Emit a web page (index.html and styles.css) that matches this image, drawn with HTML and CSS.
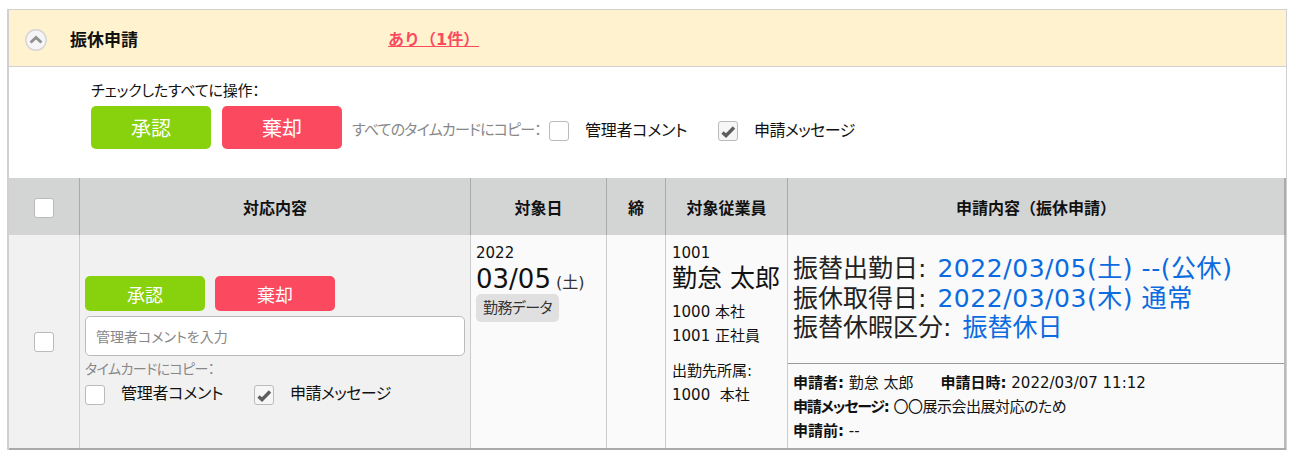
FILE: index.html
```html
<!DOCTYPE html>
<html lang="ja">
<head>
<meta charset="utf-8">
<title>振休申請</title>
<link rel="stylesheet" href="styles.css">
</head>
<body>
<section class="panel">
  <header class="band">
    <span class="toggle"><svg width="22" height="22" viewBox="0 0 22 22"><circle cx="11" cy="11" r="10.2" fill="#f5f5f5" stroke="#d4d4d4" stroke-width="1.4"/><path d="M5.6 13.6 11 8.4l5.4 5.2" fill="none" stroke="#909090" stroke-width="2.8"/></svg></span>
    <h2 class="band-title">振休申請</h2>
    <a class="band-link" href="#">あり（1件）</a>
  </header>
  <div class="bulk">
    <p class="bulk-label narrow">チェックしたすべてに操作：</p>
    <div class="bulk-row">
      <button class="btn btn-ok btn-lg">承認</button>
      <button class="btn btn-ng btn-lg">棄却</button>
      <span class="copy-label narrow">すべてのタイムカードにコピー：</span>
      <span class="box"></span><span class="opt narrow">管理者コメント</span>
      <span class="box box-on"><svg width="18" height="18" viewBox="0 0 18 18"><path d="M3.5 10.5 7 13.6 15 5.5" fill="none" stroke="#5e5e5e" stroke-width="3.4"/></svg></span><span class="opt narrow opt-last">申請メッセージ</span>
    </div>
  </div>
  <div class="grid">
    <div class="th"><span class="box box-head"></span></div>
    <div class="th">対応内容</div>
    <div class="th">対象日</div>
    <div class="th">締</div>
    <div class="th">対象従業員</div>
    <div class="th th-last">申請内容（振休申請）</div>

    <div class="td td-grey td-check"><span class="box"></span></div>
    <div class="td td-grey td-action">
      <div class="row-btns">
        <button class="btn btn-ok btn-sm">承認</button>
        <button class="btn btn-ng btn-sm">棄却</button>
      </div>
      <input class="comment narrow" type="text" placeholder="管理者コメントを入力">
      <div class="copy-small narrow">タイムカードにコピー：</div>
      <div class="row-opts">
        <span class="box"></span><span class="opt narrow">管理者コメント</span>
        <span class="box box-on"><svg width="18" height="18" viewBox="0 0 18 18"><path d="M3.5 10.5 7 13.6 15 5.5" fill="none" stroke="#5e5e5e" stroke-width="3.4"/></svg></span><span class="opt narrow opt-last">申請メッセージ</span>
      </div>
    </div>
    <div class="td td-date">
      <div class="year">2022</div>
      <div class="date">03/05<span class="dow">(土)</span></div>
      <span class="tag narrow">勤務データ</span>
    </div>
    <div class="td"></div>
    <div class="td td-emp">
      <div class="emp-id">1001</div>
      <div class="emp-name">勤怠 太郎</div>
      <div class="emp-line emp-gap">1000 本社</div>
      <div class="emp-line">1001 正社員</div>
      <div class="emp-line emp-gap2">出勤先所属:</div>
      <div class="emp-line">1000&nbsp; 本社</div>
    </div>
    <div class="td td-req">
      <div class="req-main">
        <div>振替出勤日: <span class="blue wide">2022/03/05(土) --(公休)</span></div>
        <div>振休取得日: <span class="blue wide">2022/03/03(木) 通常</span></div>
        <div>振替休暇区分: <span class="blue">振替休日</span></div>
      </div>
      <div class="req-meta">
        <div><b>申請者:</b> 勤怠 太郎<b class="meta-gap">申請日時:</b> 2022/03/07 11:12</div>
        <div><b class="narrow tight">申請メッセージ:</b> <span class="narrow msg">〇〇展示会出展対応のため</span></div>
        <div><b>申請前:</b> --</div>
      </div>
    </div>
  </div>
</section>
</body>
</html>
```
FILE: styles.css
```css
* { box-sizing: border-box; }
body {
  margin: 9px 9px 0 7px;
  background: #fff;
  color: #111;
  font-family: "DejaVu Sans", "Noto Sans CJK JP", sans-serif;
  font-size: 13px;
}
.panel {
  border: 1px solid #cfcfcf;
  border-width: 1px 1px 0 2px;
  border-color: #d0d0d0;
  background: #fff;
}
.narrow { font-feature-settings: "palt"; }
.band {
  display: flex;
  align-items: center;
  height: 57px;
  padding: 4px 0 0 16px;
  background: #fff3cf;
  border-bottom: 1px solid #d0d0d0;
}
.toggle { display: flex; width: 22px; height: 22px; }
.band-title {
  margin: 0 0 0 23px;
  width: 318px;
  font-size: 17px;
  font-weight: 700;
  line-height: 24px;
}
.band-link {
  color: #fb4a60;
  font-size: 16px;
  font-weight: 700;
  line-height: 24px;
}
.bulk { height: 111px; padding: 14px 0 0 82px; }
.bulk-label { margin: 0; height: 25px; line-height: 20px; font-size: 15px; letter-spacing: -.2px; }
.bulk-row { display: flex; align-items: center; }
.bulk-row .box { margin-top: 7px; }
.bulk-row .opt { margin-top: 2px; }
.btn {
  border: 0;
  border-radius: 5px;
  color: #fff;
  font-family: inherit;
  padding: 0;
  width: 120px;
}
.btn-ok { background: #88d10d; }
.btn-ng { background: #fb4a5f; }
.btn-lg { height: 43px; font-size: 20px; margin-right: 11px; }
.btn-sm { height: 35px; font-size: 18px; margin-right: 10px; }
.copy-label { width: 197px; margin: 2px 0 0 -1px; color: #888; font-size: 15px; letter-spacing: -.8px; }
.box {
  display: flex;
  align-items: center;
  justify-content: center;
  flex: none;
  width: 20px;
  height: 20px;
  background: #fff;
  border: 1px solid #bbb;
  border-radius: 3px;
}
.box-on { background: #f6f6f6; }
.box-head { margin-top: 2px; }
.opt { font-size: 16px; letter-spacing: -.2px; margin-left: 16px; width: 133px; }
.opt-last { letter-spacing: -.6px; }
.grid {
  display: grid;
  grid-template-columns: 71px 391px 136px 59px 122px 1fr;
  grid-template-rows: 57px 213px;
  border-bottom: 2px solid #aaa;
}
.th {
  display: flex;
  align-items: center;
  justify-content: center;
  background: #d3d5d5;
  border-right: 1px solid #aaa;
  font-size: 16px;
  font-weight: 700;
}
.th-last { border-right: 2px solid #aaa; }
.td {
  background: #fafafa;
  border-right: 1px solid #ccc;
}
.td-grey { background: #f1f1f1; }
.td-check { display: flex; align-items: center; justify-content: center; }
.td-action { padding: 41px 5px 0 5px; }
.row-btns { display: flex; }
.comment {
  display: block;
  width: 380px;
  height: 40px;
  margin-top: 5px;
  padding: 2px 10px 0;
  border: 1px solid #bbb;
  border-radius: 5px;
  font-family: inherit;
  font-size: 14px;
}
.comment::placeholder { color: #888; }
.copy-small { margin-top: 3px; color: #888; font-size: 14px; letter-spacing: -.6px; line-height: 20px; }
.row-opts { display: flex; align-items: center; margin-top: 6px; }
.row-opts .opt { line-height: 20px; margin-top: -3px; width: 133px; }
.row-opts .opt-last { width: auto; }
.td-date { padding: 8px 0 0 5px; }
.year { font-size: 15px; line-height: 20px; }
.date { font-size: 26px; line-height: 32px; }
.dow { margin-left: 5px; font-size: 16px; color: #333; }
.tag {
  display: inline-block;
  height: 28px;
  margin-top: -5px;
  padding: 0 7px;
  background: #e0e0e0;
  border-radius: 5px;
  font-size: 15px;
  letter-spacing: -.6px;
  line-height: 28px;
  color: #333;
}
.td-emp { padding: 8px 0 0 6px; }
.emp-id { font-size: 15px; line-height: 20px; }
.emp-name { font-size: 25px; line-height: 32px; }
.emp-line { font-size: 15px; line-height: 24px; }
.emp-gap { margin-top: 5px; }
.emp-gap2 { margin-top: 11px; }
.td-req {
  display: flex;
  flex-direction: column;
  border-right: 2px solid #bbb;
}
.req-main {
  flex: none;
  height: 129px;
  padding: 19px 5px 0;
  border-bottom: 1px solid #999;
  font-size: 25px;
  line-height: 29.5px;
  word-spacing: 3px;
  color: #222;
}
.blue { color: #0b6bdf; }
.wide { letter-spacing: .55px; word-spacing: 0; }
.req-meta { padding: 7px 5px 0; font-size: 15px; line-height: 24px; }
.meta-gap { margin-left: 27px; }
.tight { letter-spacing: -1.2px; }
.msg { letter-spacing: -.5px; }
```
